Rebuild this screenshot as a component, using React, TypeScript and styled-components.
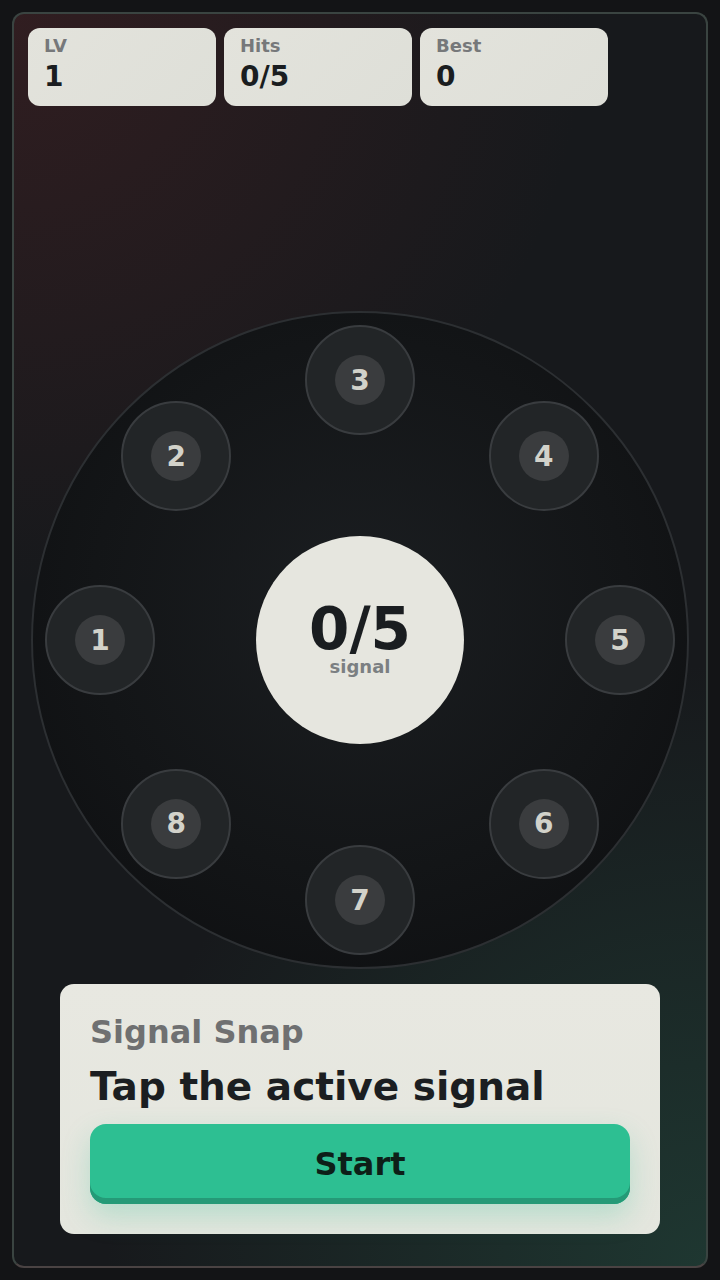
import React from 'react';
import styled, { createGlobalStyle } from 'styled-components';

const GlobalStyle = createGlobalStyle`
  html, body {
    margin: 0;
    padding: 0;
    background: #131416;
    font-family: 'DejaVu Sans', 'Liberation Sans', sans-serif;
  }
`;

const Page = styled.div`
  width: 720px;
  height: 1280px;
  padding: 12px;
  box-sizing: border-box;
`;

const Frame = styled.div`
  height: 100%;
  box-sizing: border-box;
  border: 2px solid #3a4441;
  border-bottom-color: #4a4343;
  border-radius: 12px;
  padding: 14px 14px 16px;
  display: flex;
  flex-direction: column;
  background:
    radial-gradient(circle at 0% 0%, rgba(80, 35, 38, 0.45), transparent 40%),
    radial-gradient(circle at 100% 100%, rgba(38, 85, 70, 0.5), transparent 42%),
    #17191c;
`;

const StatsRow = styled.div`
  display: flex;
  gap: 8px;
`;

const StatCard = styled.div`
  width: 188px;
  height: 78px;
  box-sizing: border-box;
  border-radius: 12px;
  padding: 7px 16px;
  background: linear-gradient(135deg, #e3e3dc, #dedfd8);
  display: flex;
  flex-direction: column;
`;

const StatLabel = styled.div`
  font-size: 18px;
  font-weight: bold;
  color: #76787a;
  line-height: 22px;
`;

const StatValue = styled.div`
  font-size: 28px;
  font-weight: bold;
  color: #1a1d20;
  line-height: 34px;
  margin-top: 3px;
`;

const Stage = styled.div`
  flex: 1;
  display: flex;
  align-items: flex-end;
  justify-content: center;
`;

const Ring = styled.div`
  position: relative;
  width: 658px;
  height: 658px;
  box-sizing: border-box;
  border-radius: 50%;
  border: 2px solid #2c2f32;
  background: radial-gradient(circle at 50% 45%, #1b1e21 0%, #131517 55%, #0c0d0f 100%);
  display: flex;
  align-items: center;
  justify-content: center;
`;

const Node = styled.div<{ $x: number; $y: number }>`
  position: absolute;
  left: ${(p) => p.$x}px;
  top: ${(p) => p.$y}px;
  width: 110px;
  height: 110px;
  margin: -55px 0 0 -55px;
  box-sizing: border-box;
  border-radius: 50%;
  border: 2px solid #393c3f;
  background: #222527;
  display: flex;
  align-items: center;
  justify-content: center;
`;

const NodeCore = styled.div`
  width: 50px;
  height: 50px;
  border-radius: 50%;
  background: #3a3c3e;
  display: flex;
  align-items: center;
  justify-content: center;
  font-size: 28px;
  font-weight: bold;
  color: #d2d2ca;
`;

const Hub = styled.div`
  width: 208px;
  height: 208px;
  border-radius: 50%;
  background: #e6e6df;
  display: flex;
  flex-direction: column;
  align-items: center;
  justify-content: center;
`;

const HubValue = styled.div`
  font-size: 58px;
  font-weight: bold;
  color: #1a1d20;
  line-height: 52px;
`;

const HubLabel = styled.div`
  font-size: 18px;
  font-weight: bold;
  color: #7b7f82;
  line-height: 20px;
  margin-top: 2px;
`;

const Panel = styled.div`
  width: 600px;
  box-sizing: border-box;
  align-self: center;
  margin: 15px 0 16px;
  padding: 28px 30px 30px;
  border-radius: 14px;
  background: linear-gradient(180deg, #e8e8e1, #e4e6de);
`;

const Eyebrow = styled.div`
  font-size: 32px;
  font-weight: bold;
  color: #6f7071;
  line-height: 40px;
`;

const Title = styled.div`
  font-size: 39px;
  font-weight: bold;
  color: #1b1e21;
  line-height: 50px;
  margin-top: 10px;
`;

const StartButton = styled.button`
  display: block;
  width: 100%;
  height: 80px;
  margin-top: 12px;
  border: none;
  border-radius: 16px;
  background: #2dbf92;
  box-shadow: inset 0 -6px 0 #259a77, 0 12px 28px rgba(45, 191, 146, 0.25);
  font-family: inherit;
  font-size: 32px;
  font-weight: bold;
  color: #0d1f18;
  padding: 0;
`;

const stats = [
  { label: 'LV', value: '1' },
  { label: 'Hits', value: '0/5' },
  { label: 'Best', value: '0' },
];

const RADIUS = 260;
const CENTER = 327;

export default function App() {
  const nodes = Array.from({ length: 8 }, (_, i) => {
    const angle = Math.PI + (i * Math.PI) / 4;
    return {
      n: i + 1,
      x: CENTER + RADIUS * Math.cos(angle),
      y: CENTER + RADIUS * Math.sin(angle),
    };
  });

  return (
    <>
      <GlobalStyle />
      <Page>
        <Frame>
          <StatsRow>
            {stats.map((s) => (
              <StatCard key={s.label}>
                <StatLabel>{s.label}</StatLabel>
                <StatValue>{s.value}</StatValue>
              </StatCard>
            ))}
          </StatsRow>
          <Stage>
            <Ring>
              {nodes.map((nd) => (
                <Node key={nd.n} $x={nd.x} $y={nd.y}>
                  <NodeCore>{nd.n}</NodeCore>
                </Node>
              ))}
              <Hub>
                <HubValue>0/5</HubValue>
                <HubLabel>signal</HubLabel>
              </Hub>
            </Ring>
          </Stage>
          <Panel>
            <Eyebrow>Signal Snap</Eyebrow>
            <Title>Tap the active signal</Title>
            <StartButton>Start</StartButton>
          </Panel>
        </Frame>
      </Page>
    </>
  );
}
